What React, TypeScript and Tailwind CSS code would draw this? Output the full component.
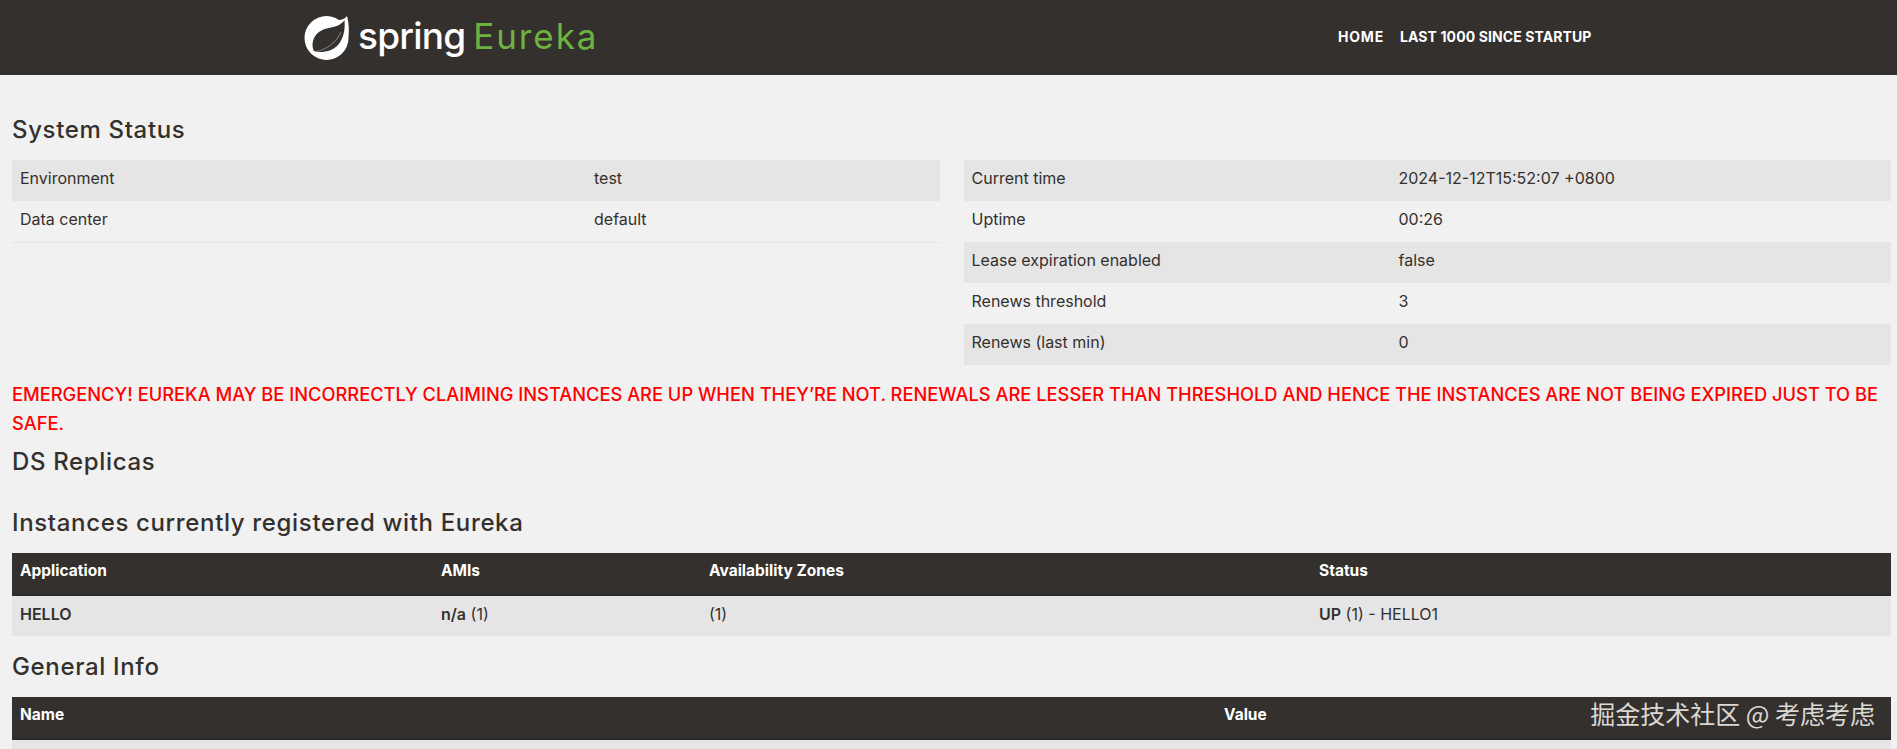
const statusLeft = [
  ['Environment', 'test'],
  ['Data center', 'default'],
];

const statusRight = [
  ['Current time', '2024-12-12T15:52:07 +0800'],
  ['Uptime', '00:26'],
  ['Lease expiration enabled', 'false'],
  ['Renews threshold', '3'],
  ['Renews (last min)', '0'],
];

function SpringLeaf() {
  return (
    <svg viewBox="0 0 46 46" className="w-[46px] h-[46px] shrink-0">
      <circle cx="22.500" cy="23" r="22" fill="#ffffff" />
      <path fill="#ffffff" d="M35 5C38 5 41 3.500 43 1C45 8 45.500 16 44 24L36 12Z" />
      <path
        fill="#34302d"
        d="M40.500 5C38 9 33 11.500 27 12.500C18 14 11 18 9 26C8 30 8.500 33 10 36C13 37.500 20 37.500 27 35C36 31.500 42 20 40.500 5Z"
      />
      <path fill="none" stroke="#ffffff" strokeWidth="0.800" opacity="0.500" d="M11 37C20 35 31 30 37 17" />
    </svg>
  );
}

function StatusTable({ rows, labelWidth }: { rows: string[][]; labelWidth: string }) {
  return (
    <table className="w-full table-fixed border-collapse">
      <colgroup>
        <col className={labelWidth} />
        <col />
      </colgroup>
      <tbody>
        {rows.map((row, i) => (
          <tr key={row[0]} className={i % 2 === 0 ? 'bg-[#e5e5e5]' : 'border-b border-[#e5e5e5]'}>
            <td className="h-[41px] px-2 pt-0 pb-[5px]">{row[0]}</td>
            <td className="h-[41px] px-2 pt-0 pb-[5px]">{row[1]}</td>
          </tr>
        ))}
      </tbody>
    </table>
  );
}

export default function App() {
  return (
    <div className="relative h-[749px] overflow-hidden bg-[#f1f1f1] text-[16px] text-[#34302d] font-['Inter',sans-serif]">
      <nav className="h-[75px] bg-[#34302d] flex items-center">
        <div className="ml-[304px] w-[1034px] flex items-center gap-[8px]">
          <SpringLeaf />
          <span className="text-[37px] leading-none text-white font-medium tracking-[-0.8px] mb-1">spring</span>
          <span className="text-[35px] leading-none text-[#6db33f] font-normal tracking-[1.9px] mb-[3px]">Eureka</span>
        </div>
        <div className="flex items-center gap-[16px] text-[14px] font-bold text-white tracking-[0.1px] mb-[3px]">
          <span className="tracking-[0.8px]">HOME</span>
          <span>LAST 1000 SINCE STARTUP</span>
        </div>
      </nav>

      <main className="pl-3 pr-[6px]">
        <h1 className="mt-[39px] mb-[14px] text-[24px] leading-[32px] font-medium tracking-[0.65px]">System Status</h1>
        <div className="grid grid-cols-2 gap-6 items-start">
          <StatusTable rows={statusLeft} labelWidth="w-[574px]" />
          <StatusTable rows={statusRight} labelWidth="w-[427px]" />
        </div>

        <p className="mt-[15px] text-[18.3px] leading-[29px] font-medium text-[#ff0000] uppercase">
          Emergency! Eureka may be incorrectly claiming instances are up when they’re not. Renewals are lesser than threshold and hence the instances are not being expired just to be safe.
        </p>

        <h2 className="mt-[8px] text-[24px] leading-[32px] font-medium tracking-[0.65px]">DS Replicas</h2>
        <h2 className="mt-[29px] mb-[14px] text-[24px] leading-[32px] font-medium tracking-[0.65px]">Instances currently registered with Eureka</h2>

        <table className="w-full table-fixed border-collapse">
          <colgroup>
            <col className="w-[421px]" />
            <col className="w-[268px]" />
            <col className="w-[610px]" />
            <col />
          </colgroup>
          <thead>
            <tr className="bg-[#34302d] text-white text-[15.5px] border-b-2 border-[#2b2825]">
              <th className="h-[42px] px-2 pt-0 pb-[5px] text-left font-bold">Application</th>
              <th className="h-[42px] px-2 pt-0 pb-[5px] text-left font-bold">AMIs</th>
              <th className="h-[42px] px-2 pt-0 pb-[5px] text-left font-bold">Availability Zones</th>
              <th className="h-[42px] px-2 pt-0 pb-[5px] text-left font-bold">Status</th>
            </tr>
          </thead>
          <tbody>
            <tr className="bg-[#e5e5e5]">
              <td className="h-[41px] px-2 pt-0 pb-[5px]"><b className="font-semibold">HELLO</b></td>
              <td className="h-[41px] px-2 pt-0 pb-[5px]"><b className="font-semibold">n/a</b> (1)</td>
              <td className="h-[41px] px-2 pt-0 pb-[5px]">(1)</td>
              <td className="h-[41px] px-2 pt-0 pb-[5px]"><b className="font-semibold">UP</b> (1) - HELLO1</td>
            </tr>
          </tbody>
        </table>

        <h2 className="mt-[15px] mb-[14px] text-[24px] leading-[32px] font-medium tracking-[0.65px]">General Info</h2>

        <table className="w-full table-fixed border-collapse">
          <colgroup>
            <col className="w-[1204px]" />
            <col />
          </colgroup>
          <thead>
            <tr className="bg-[#34302d] text-white text-[15.5px] border-b-2 border-[#2b2825]">
              <th className="h-[42px] px-2 pt-0 pb-[5px] text-left font-bold">Name</th>
              <th className="h-[42px] px-2 pt-0 pb-[5px] text-left font-bold">Value</th>
            </tr>
          </thead>
          <tbody>
            <tr className="bg-[#e5e5e5]">
              <td className="h-[41px]"></td>
              <td className="h-[41px]"></td>
            </tr>
          </tbody>
        </table>
      </main>

      <div className="absolute right-[22px] top-[697px] text-[25px] leading-[32px] text-[#dcd8d4] font-['Noto_Sans_CJK_SC',sans-serif]">
        掘金技术社区 @ 考虑考虑
      </div>
    </div>
  );
}
